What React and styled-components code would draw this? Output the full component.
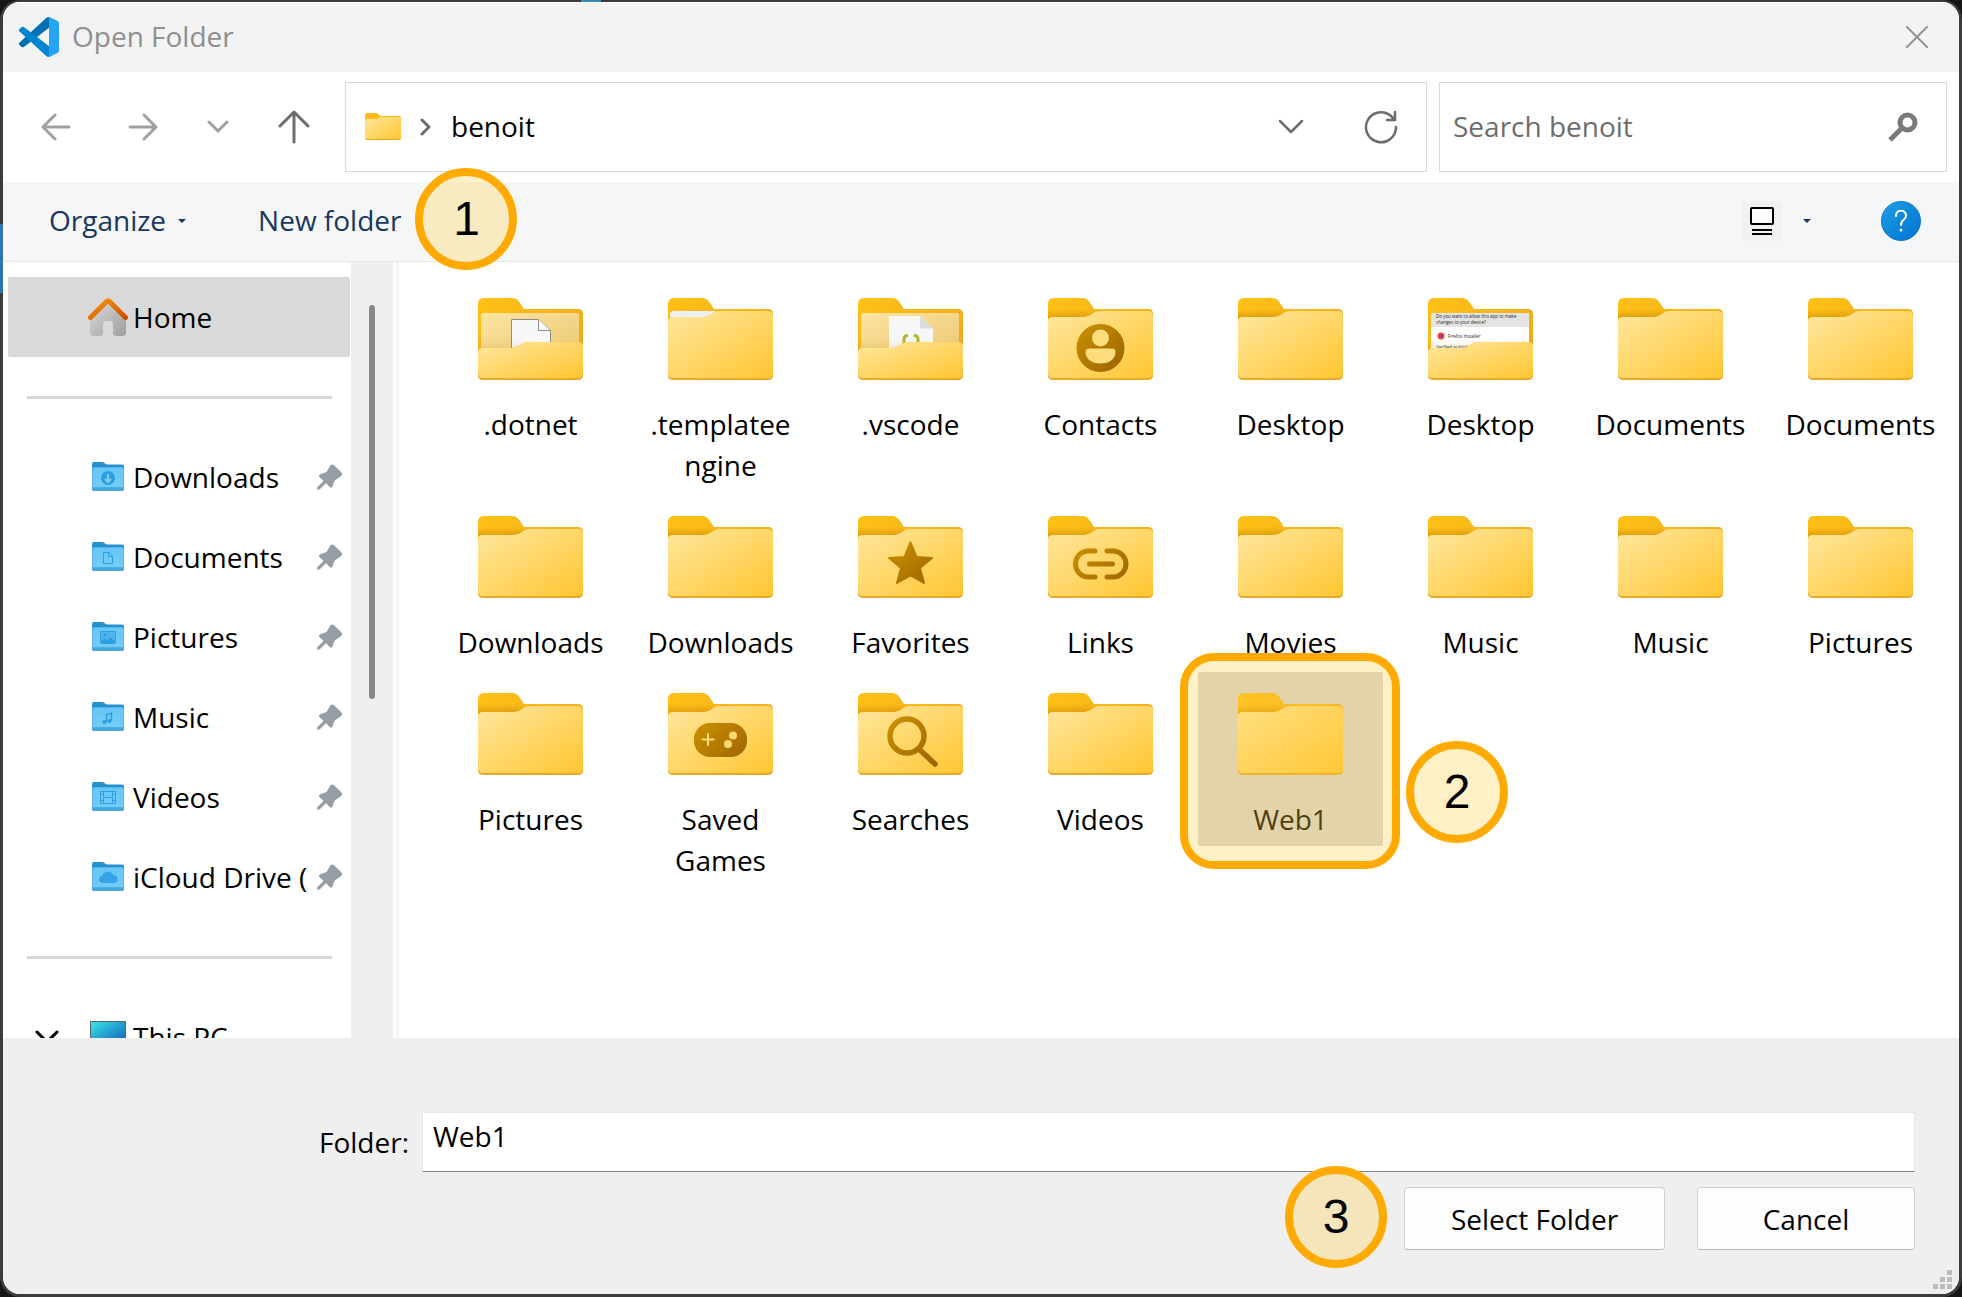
import React from 'react';
import styled, { createGlobalStyle } from 'styled-components';

const GlobalStyle = createGlobalStyle`
  *, *::before, *::after {
    box-sizing: border-box;
  }

  body {
    margin: 0;
    background: #161616;
  }

  body, button, input {
    font-family: 'Open Sans', 'Noto Sans', sans-serif;
    font-size: 28px;
    line-height: 41px;
    color: #000;
  }
`;

const Frame = styled.div`
  display: flex;
  height: 100vh;
  min-height: 720px;
  padding: 2px 3px 3px;
  border-radius: 20px;
  background:
    linear-gradient(#2f74ac, #2f74ac) 0 224px / 3px 69px no-repeat,
    linear-gradient(#2f7fa8, #3f9bc4) 581px 0 / 20px 2px no-repeat,
    #3c3c3c;
`;

const Dialog = styled.div`
  flex: 1;
  min-width: 0;
  display: flex;
  flex-direction: column;
  overflow: hidden;
  border-radius: 17px;
  background: #fff;
`;

const IconButton = styled.button`
  display: flex;
  align-items: center;
  justify-content: center;
  flex: none;
  width: ${props => props.$width}px;
  height: 60px;
  padding: 0;
  border: 0;
  background: none;
  color: ${props => props.$color || '#6d6d6d'};
`;

const TitleBar = styled.header`
  flex: none;
  display: flex;
  align-items: center;
  height: 70px;
  padding: 0 12px 2px 16px;
  border-top: 1px solid #fff;
  background: #f3f3f3;
`;

const Title = styled.h1`
  flex: 1;
  margin: 0 0 0 13px;
  font-size: 28px;
  font-weight: 400;
  color: #8f8f8f;
`;

const NavBar = styled.div`
  flex: none;
  display: flex;
  align-items: center;
  height: 110px;
  padding: 0 12px 1px 10px;
`;

const AddressBar = styled.div`
  flex: 1;
  display: flex;
  align-items: center;
  height: 90px;
  margin: 0 12px 0 6px;
  padding-left: 19px;
  border: 1px solid #d9d9d9;
`;

const Crumb = styled.span`
  flex: 1;
`;

const SearchBox = styled.div`
  flex: 0 1 508px;
  display: flex;
  align-items: center;
  height: 90px;
  border: 1px solid #d9d9d9;
`;

const SearchInput = styled.input`
  flex: 1;
  min-width: 0;
  padding: 0 0 0 13px;
  border: 0;
  outline: 0;
  background: none;

  &::placeholder {
    color: #6d6d6d;
    opacity: 1;
  }
`;

const Toolbar = styled.div`
  flex: none;
  display: flex;
  align-items: center;
  height: 80px;
  padding: 0 38px 2px 46px;
  border-bottom: 1px solid #e6e7e8;
  background: #f5f6f8;
`;

const Commands = styled.div`
  flex: 1;
  display: flex;
  gap: 72px;
`;

const ToolButton = styled.button`
  display: flex;
  align-items: center;
  gap: ${props => props.$gap || 12}px;
  padding: 0;
  border: 0;
  background: none;
  color: #1b365d;
`;

const Caret = styled.span`
  border: 4px solid transparent;
  border-top-color: #1b365d;
  border-bottom: 0;
`;

const ViewIcon = styled.span`
  display: flex;
  align-items: center;
  justify-content: center;
  width: 40px;
  height: 40px;
  border-radius: 4px;
  background: #f1f1f1;
`;

const HelpButton = styled.button`
  display: flex;
  align-items: center;
  justify-content: center;
  width: 40px;
  height: 40px;
  margin-left: 70px;
  padding: 0;
  border: 1px solid #0c74c4;
  border-radius: 50%;
  background: linear-gradient(135deg, #1e9fe6, #0072d2);
`;

const Anchor = styled.div`
  position: relative;
`;

const Badge = styled.div`
  position: absolute;
  z-index: 2;
  top: ${props => props.$top || '50%'};
  ${props => (props.$before ? 'right' : 'left')}: calc(100% + ${props => props.$distance}px);
  display: flex;
  align-items: center;
  justify-content: center;
  width: 102px;
  height: 102px;
  margin-top: -53px;
  border: 8px solid #ffaa00;
  border-radius: 50%;
  background: rgba(255, 205, 65, 0.3);
  background-clip: padding-box;
  font-family: 'Liberation Sans', Arial, sans-serif;
  font-size: 48px;
  line-height: 54px;
`;

const Highlight = styled.div`
  position: absolute;
  z-index: 1;
  inset: -19px -17px -23px -18px;
  border: 8px solid #ffaa00;
  border-radius: 34px;
  background: rgba(255, 205, 65, 0.3);
  background-clip: padding-box;
`;

const Body = styled.div`
  flex: 1;
  min-height: 0;
  display: flex;
`;

const Sidebar = styled.nav`
  flex: none;
  width: 348px;
  padding: 15px 1px 0 5px;
  overflow: hidden;
`;

const SideItem = styled.button`
  display: flex;
  align-items: center;
  width: 100%;
  height: 80px;
  padding: 0 8px 0 0;
  border: 0;
  border-radius: 2px;
  background: ${props => (props.$active ? '#d9d9d9' : 'none')};
  text-align: left;
`;

const Expander = styled.span`
  flex: none;
  display: flex;
  width: 80px;
  padding-left: 27px;
`;

const SideIcon = styled.span`
  flex: none;
  display: flex;
  justify-content: center;
  width: 40px;
`;

const SideLabel = styled.span`
  flex: 1;
  margin: 0 7px 0 5px;
  overflow: hidden;
  white-space: nowrap;
`;

const Divider = styled.hr`
  height: 3px;
  margin: 39px 18px 38px 19px;
  border: 0;
  background: #d6d6d6;
`;

const ScrollTrack = styled.div`
  flex: none;
  width: 42px;
  padding: 43px 18px 0;
  background: #efefef;
`;

const ScrollThumb = styled.div`
  height: 394px;
  border-radius: 3px;
  background: #878787;
`;

const Content = styled.main`
  flex: 1;
  min-width: 0;
  overflow: hidden;
  margin-left: 3px;
  padding: 15px 6px 0 39px;
  border-left: 3px solid #f7f7f7;
`;

const FileGrid = styled.div`
  display: grid;
  grid-template-columns: repeat(auto-fill, 185px);
  gap: 3px 5px;
  align-items: start;
`;

const FileItem = styled.button`
  display: flex;
  flex-direction: column;
  align-items: center;
  gap: 24px;
  width: 100%;
  padding: 21px 0 6px;
  border: 0;
  border-radius: 2px;
  background: ${props => (props.$selected ? '#d6d6d6' : 'none')};
`;

const FileLabel = styled.span`
  max-width: 158px;
  white-space: pre-line;
  text-align: center;
`;

const Footer = styled.footer`
  position: relative;
  flex: none;
  display: flex;
  flex-direction: column;
  gap: 15px;
  padding: 74px 44px 44px;
  background: #efefef;
`;

const FieldRow = styled.div`
  display: flex;
  align-items: center;
`;

const FieldLabel = styled.label`
  width: 362px;
  margin-right: 13px;
  text-align: right;
`;

const FolderInput = styled.input`
  flex: 1;
  min-width: 0;
  height: 60px;
  padding: 0 10px 12px;
  border: 1px solid #e6e6e6;
  border-bottom-color: #868686;
  border-radius: 0;
  outline: 0;
  background: #fff;
`;

const Actions = styled.div`
  display: flex;
  justify-content: flex-end;
  gap: 32px;
`;

const ActionButton = styled.button`
  width: ${props => props.$width}px;
  height: 63px;
  padding: 2px 0 0;
  border: 1px solid #d0d0d0;
  border-bottom-color: #bababa;
  border-radius: 4px;
  background: #fdfdfd;
`;

const Grip = styled.svg`
  position: absolute;
  right: 7px;
  bottom: 5px;
`;

const Defs = styled.svg`
  position: absolute;
`;

const Stroke = ({ width, height, d, weight = 3 }) => (
  <svg
    width={width}
    height={height}
    viewBox={`0 0 ${width} ${height}`}
    fill="none"
    stroke="currentColor"
    strokeWidth={weight}
    strokeLinecap="round"
    strokeLinejoin="round"
  >
    <path d={d} />
  </svg>
);

const Gradients = () => (
  <Defs width="0" height="0" aria-hidden="true">
    <defs>
      <linearGradient id="front" x1="0" y1="0" x2="1" y2="1">
        <stop offset="0" stopColor="#ffe79f" />
        <stop offset="1" stopColor="#ffc631" />
      </linearGradient>
      <linearGradient id="back" x1="0" y1="0" x2="1" y2="1">
        <stop offset="0" stopColor="#ffc116" />
        <stop offset="1" stopColor="#eaa41f" />
      </linearGradient>
      <linearGradient id="inside" x1="0" y1="0" x2="1" y2="1">
        <stop offset="0" stopColor="#fde4a2" />
        <stop offset="1" stopColor="#ecc874" />
      </linearGradient>
      <linearGradient id="shade" x1="0" y1="0" x2="0" y2="1">
        <stop offset="0" stopColor="#c98a00" stopOpacity="0" />
        <stop offset="1" stopColor="#b87a00" stopOpacity="0.45" />
      </linearGradient>
      <linearGradient id="glyph" gradientUnits="userSpaceOnUse" x1="30" y1="24" x2="75" y2="72">
        <stop offset="0" stopColor="#cc9200" />
        <stop offset="1" stopColor="#9c6400" />
      </linearGradient>
      <linearGradient id="sky" x1="0" y1="0" x2="0" y2="1">
        <stop offset="0" stopColor="#67c6f6" />
        <stop offset="1" stopColor="#72ccf8" />
      </linearGradient>
      <linearGradient id="roof" x1="0" y1="0" x2="1" y2="1">
        <stop offset="0" stopColor="#f59a0c" />
        <stop offset="1" stopColor="#d04a00" />
      </linearGradient>
      <linearGradient id="wall" x1="0" y1="0" x2="1" y2="1">
        <stop offset="0" stopColor="#dcdcdc" />
        <stop offset="1" stopColor="#9e9e9e" />
      </linearGradient>
      <linearGradient id="screen" x1="0" y1="0" x2="1" y2="1">
        <stop offset="0" stopColor="#3be3ea" />
        <stop offset="1" stopColor="#0b5cb5" />
      </linearGradient>
      <clipPath id="pocket">
        <rect x="3" y="15" width="98" height="42" rx="2" />
      </clipPath>
    </defs>
  </Defs>
);

const CodeLogo = () => (
  <svg width="40" height="40" viewBox="0 0 100 100">
    <path fill="#0070b3" d="M96.5 10.8 75.9.9A6.2 6.2 0 0 0 68.8 2.1L1.3 63.6a4.2 4.2 0 0 0 0 6.1l5.5 5a4.2 4.2 0 0 0 5.3.3L93.4 13.4A4.2 4.2 0 0 1 100 16.7v-.3a6.3 6.3 0 0 0-3.5-5.6Z" />
    <path fill="#0086d1" d="M96.5 89.2 75.9 99.1a6.2 6.2 0 0 1-7.1-1.2L1.3 36.4a4.2 4.2 0 0 1 0-6.1l5.5-5a4.2 4.2 0 0 1 5.3-.3l81.3 61.6a4.2 4.2 0 0 0 6.6-3.3v.3a6.3 6.3 0 0 1-3.5 5.6Z" />
    <path fill="#25a5f2" d="M75.9 99.1a6.2 6.2 0 0 1-7.1-1.2A3.7 3.7 0 0 0 75 95.3V4.7a3.7 3.7 0 0 0-6.2-2.6A6.2 6.2 0 0 1 75.9.9l20.6 9.9a6.3 6.3 0 0 1 3.5 5.6v67.2a6.3 6.3 0 0 1-3.5 5.6Z" />
  </svg>
);

// emblems drawn on a closed folder
const glyphs = {
  contact: (
    <g>
      <ellipse cx="52.5" cy="50" rx="24" ry="24" fill="url(#glyph)" />
      <circle cx="52.5" cy="40" r="8.5" fill="#ffdc7c" />
      <path fill="#ffdc7c" d="M41 50.5H64Q67.5 50.5 67.5 54C67.5 61 61 65.5 52.5 65.5S37.5 61 37.5 54Q37.5 50.5 41 50.5Z" />
    </g>
  ),
  star: (
    <path
      fill="url(#glyph)"
      stroke="url(#glyph)"
      strokeWidth="2"
      strokeLinejoin="round"
      d="M52.5 26.5 58.5 41 74 42 62 52 66 67 52.5 59.5 39 67 43 52 31 42 46.5 41Z"
    />
  ),
  link: (
    <g fill="none" stroke="url(#glyph)" strokeWidth="5" strokeLinecap="round">
      <path d="M47 35H40.5A13 13 0 0 0 40.5 61H47" />
      <path d="M59 35H65A13 13 0 0 1 65 61H59" />
      <path d="M41.5 48 64.5 48.01" />
    </g>
  ),
  game: (
    <g>
      <rect x="26" y="30" width="53" height="34" rx="16" fill="url(#glyph)" />
      <path d="M40 41V52M34.5 46.5H45.5" stroke="#ffdc7c" strokeWidth="2" strokeLinecap="round" />
      <circle cx="65" cy="42.5" r="4" fill="#ffd76e" />
      <circle cx="60" cy="51" r="4" fill="#ffd76e" />
    </g>
  ),
  search: (
    <g fill="none" stroke="url(#glyph)" strokeWidth="5.5" strokeLinecap="round">
      <circle cx="49" cy="43" r="17" />
      <path d="M62 57 77 71" />
    </g>
  ),
};

// file previews that stick out of an open folder
const pockets = {
  paper: (
    <g fill="#f8f8f8" stroke="#8c8c8c">
      <path d="M33.5 60V21.5H60.5L72.5 32.5V60" />
      <path d="M60.5 21.5V32.5H72.5" />
    </g>
  ),
  code: (
    <g>
      <path fill="#f6f7f8" d="M31 60V18H62L75 30.5V60Z" />
      <path fill="#dcdddf" d="M62 18V30.5H75Z" />
      <path fill="none" stroke="#b5b334" strokeWidth="3" d="M50 37.5Q46 37.5 46 41V47M56 37.5Q60 37.5 60 41V47" />
    </g>
  ),
  prompt: (
    <g clipPath="url(#pocket)" fontSize="4.5" fill="#222">
      <rect x="3" y="15" width="98" height="42" fill="#fff" />
      <rect x="3" y="15" width="98" height="14" fill="#e4e4e4" />
      <text x="8" y="20">Do you want to allow this app to make</text>
      <text x="8" y="26">changes to your device?</text>
      <circle cx="13" cy="38" r="3.5" fill="#f0462f" />
      <circle cx="13" cy="38" r="1.5" fill="#6b3fd0" />
      <text x="20" y="40">Firefox Installer</text>
      <text x="8" y="51">Verified publisher: Mozilla</text>
    </g>
  ),
};

const closedFront = 'M0 24Q0 19 5 19H36Q40 19 44 16Q48 13 51 13H100Q105 13 105 18V77Q105 82 100 82H5Q0 82 0 77Z';
const openFront = 'M0 54Q0 50 5 50H34Q38 50 42 47Q46 44 50 44H100Q105 44 105 48V77Q105 82 100 82H5Q0 82 0 77Z';

const Folder = ({ kind }) => {
  const open = Boolean(pockets[kind]);
  const front = open ? openFront : closedFront;

  return (
    <svg width="105" height="82" viewBox="0 0 105 82">
      <path
        fill="url(#back)"
        d="M0 6Q0 0 6 0H34Q39 0 42 5L46 11H100Q105 11 105 16V77Q105 81 100 81H5Q0 81 0 77Z"
      />
      {open && <rect x="3" y="15" width="98" height="42" rx="2" fill="url(#inside)" />}
      {open && pockets[kind]}
      {open && <path fill="url(#shade)" opacity="0.5" d="M0 40H105V60H0Z" />}
      {kind === 'stack' && <path fill="#eef0f3" d="M2 24V16Q2 13 6 13H48L40 24Z" />}
      {!open && kind !== 'stack' && <path fill="url(#shade)" d="M0 11H46L42 20H0Z" />}
      <path fill="#e9a92c" d={front} />
      <path fill="url(#front)" d={front.replace('V77Q105 82 100 82H5Q0 82 0 77', 'V75Q105 80 100 80H5Q0 80 0 75')} />
      {glyphs[kind]}
    </svg>
  );
};

const marks = {
  download: (
    <g>
      <circle cx="16" cy="16" r="7" fill="#2d9fe0" />
      <path d="M16 12V19M13 17 16 20 19 17" stroke="#7dd0fa" strokeWidth="2" fill="none" />
    </g>
  ),
  document: (
    <path d="M11.5 10.5H17L20.5 14V21.5H11.5ZM16.5 10.5V14.5H20.5" stroke="#2d9fe0" fill="none" />
  ),
  picture: (
    <g>
      <rect x="8.5" y="9.5" width="15" height="12" rx="1" fill="#4fb5ec" stroke="#2d9fe0" />
      <path fill="#2d9fe0" d="M9 20 12 16.5 15 18.5 19 15.5 23 19V21H9Z" />
      <circle cx="13" cy="13" r="1.5" fill="#2d9fe0" />
    </g>
  ),
  music: (
    <g>
      <path d="M14.5 20V12.5L19.5 11V19" stroke="#2d9fe0" strokeWidth="1.5" fill="none" />
      <circle cx="12.5" cy="20" r="2" fill="#2d9fe0" />
      <circle cx="17.5" cy="19" r="2" fill="#2d9fe0" />
    </g>
  ),
  video: (
    <path
      d="M8.5 9.5H23.5V21.5H8.5ZM11.5 9.5V21.5M20.5 9.5V21.5M11.5 15.5H20.5M8.5 12.5H11.5M8.5 18.5H11.5M20.5 12.5H23.5M20.5 18.5H23.5"
      stroke="#2d9fe0"
      fill="none"
    />
  ),
  cloud: <path fill="#36a3e4" d="M10.5 21A3.7 3.7 0 0 1 10 13.7A6.5 6.5 0 0 1 21.5 13A4 4 0 0 1 21.5 21Z" />,
};

const BlueFolder = ({ mark }) => (
  <svg width="32" height="30" viewBox="0 0 32 30">
    <path fill="#2591cc" d="M0 2Q0 0 2 0H10Q12 0 13 1.5Q14 2.5 16 2.5H30Q32 2.5 32 4.5V20H0Z" />
    <path fill="#58b4e6" d="M0 7Q0 5 2 5H30Q32 5 32 7V27Q32 29 30 29H2Q0 29 0 27Z" />
    <path fill="url(#sky)" d="M1 8Q1 6 3 6H29Q31 6 31 8V25H1Z" />
    <path fill="#3da2d8" d="M0 25.5H32V27Q32 29 30 29H2Q0 29 0 27Z" opacity="0.7" />
    {marks[mark]}
  </svg>
);

const HomeIcon = () => (
  <svg width="40" height="40" viewBox="0 0 40 40">
    <path
      fill="url(#wall)"
      d="M20 4 38 21V35Q38 39 34 39H29Q25 39 25 36V27Q25 24 22 24H18Q15 24 15 27V36Q15 39 12 39H6Q2 39 2 35V21Z"
    />
    <path
      d="M2.5 20.5 18 5Q20 3 22 5L37.5 20.5"
      fill="none"
      stroke="url(#roof)"
      strokeWidth="5"
      strokeLinecap="round"
    />
  </svg>
);

const PcIcon = () => (
  <svg width="36" height="32" viewBox="0 0 36 32">
    <rect width="36" height="25" rx="1" fill="#56656e" />
    <rect x="1" y="1" width="34" height="23" fill="url(#screen)" />
    <path fill="#8a959c" d="M14 25H22V30H27V32H9V30H14Z" />
  </svg>
);

const Pin = () => (
  <svg width="25" height="26" viewBox="0 0 25 26">
    <path
      fill="#949fa5"
      d="M13.5 1.2Q15-.3 16.8 1L24.5 8.5Q25.8 10.5 24 12.2L17.5 16.5 15.5 22.5Q14.5 24.5 12.8 23L9 19.3 2.5 25.5H0V23.5L6.5 16.8 2.5 13Q1 11.2 3 10.2L9.5 8Z"
    />
  </svg>
);

const places = [
  { name: 'Downloads', mark: 'download' },
  { name: 'Documents', mark: 'document' },
  { name: 'Pictures', mark: 'picture' },
  { name: 'Music', mark: 'music' },
  { name: 'Videos', mark: 'video' },
  { name: 'iCloud Drive (', mark: 'cloud' },
];

const folders = [
  { name: '.dotnet', kind: 'paper' },
  { name: '.templatee\nngine', kind: 'stack' },
  { name: '.vscode', kind: 'code' },
  { name: 'Contacts', kind: 'contact' },
  { name: 'Desktop' },
  { name: 'Desktop', kind: 'prompt' },
  { name: 'Documents' },
  { name: 'Documents' },
  { name: 'Downloads' },
  { name: 'Downloads' },
  { name: 'Favorites', kind: 'star' },
  { name: 'Links', kind: 'link' },
  { name: 'Movies' },
  { name: 'Music' },
  { name: 'Music' },
  { name: 'Pictures' },
  { name: 'Pictures' },
  { name: 'Saved Games', kind: 'game' },
  { name: 'Searches', kind: 'search' },
  { name: 'Videos' },
  { name: 'Web1', selected: true },
];

export default () => (
  <Frame>
    <GlobalStyle />
    <Gradients />
    <Dialog role="dialog" aria-label="Open Folder">
      <TitleBar>
        <CodeLogo />
        <Title>Open Folder</Title>
        <IconButton $width={60} $color="#929292" aria-label="Close">
          <Stroke width={22} height={22} weight={2} d="M1 1 21 21M21 1 1 21" />
        </IconButton>
      </TitleBar>

      <NavBar>
        <IconButton $width={86} $color="#a0a0a0" aria-label="Back">
          <Stroke width={30} height={28} d="M28 14H2M14 2 2 14 14 26" />
        </IconButton>
        <IconButton $width={88} $color="#a0a0a0" aria-label="Forward">
          <Stroke width={30} height={28} d="M2 14H28M16 2 28 14 16 26" />
        </IconButton>
        <IconButton $width={62} $color="#a0a0a0" aria-label="Recent locations">
          <Stroke width={22} height={14} d="M2 2 11 11 20 2" />
        </IconButton>
        <IconButton $width={90} aria-label="Up">
          <Stroke width={32} height={34} d="M16 32V2M2 16 16 2 30 16" />
        </IconButton>
        <AddressBar>
          <svg width="36" height="28" viewBox="0 0 36 28">
            <path fill="#fbb917" d="M0 2Q0 0 2 0H11Q13 0 15 3H34Q36 3 36 5V20H0Z" />
            <path fill="#e9a92c" d="M0 8Q0 6 2 6H12L15 4H34Q36 4 36 6V25Q36 27 34 27H2Q0 27 0 25Z" />
            <path fill="url(#front)" d="M0 8Q0 6 2 6H12L15 4H34Q36 4 36 6V24Q36 26 34 26H2Q0 26 0 24Z" />
          </svg>
          <IconButton $width={50} aria-label="Show folders">
            <Stroke width={12} height={18} d="M2 2 9 9 2 16" />
          </IconButton>
          <Crumb>benoit</Crumb>
          <IconButton $width={90} aria-label="Previous locations">
            <Stroke width={26} height={16} weight={2.5} d="M2 2 13 13 24 2" />
          </IconButton>
          <IconButton $width={90} aria-label="Refresh">
            <Stroke width={34} height={34} weight={2.5} d="M32 17A15 15 0 1 1 27 6L31 10M31 2V10H23" />
          </IconButton>
        </AddressBar>
        <SearchBox>
          <SearchInput type="text" placeholder="Search benoit" aria-label="Search benoit" />
          <IconButton $width={86} $color="#7a7a7a" aria-label="Search">
            <svg width="30" height="30" viewBox="0 0 30 30" fill="none" stroke="currentColor">
              <circle cx="19.5" cy="10.5" r="7.5" strokeWidth="5" />
              <path d="M14 16 2 28" strokeWidth="5" />
            </svg>
          </IconButton>
        </SearchBox>
      </NavBar>

      <Toolbar>
        <Commands>
          <ToolButton>
            Organize
            <Caret />
          </ToolButton>
          <Anchor>
            <ToolButton>New folder</ToolButton>
            <Badge $distance={14}>1</Badge>
          </Anchor>
        </Commands>
        <ToolButton $gap={21} aria-label="Change view">
          <ViewIcon>
            <svg width="24" height="28" viewBox="0 0 24 28">
              <rect x="1" y="1" width="22" height="16" rx="1" fill="#fff" stroke="#000" strokeWidth="2" />
              <path d="M2 23H22M2 27H22" stroke="#000" strokeWidth="2" />
            </svg>
          </ViewIcon>
          <Caret />
        </ToolButton>
        <HelpButton aria-label="Help">
          <svg width="14" height="22" viewBox="0 0 14 22">
            <path
              d="M2 6A5 5 0 1 1 10 9.5Q7 11.5 7 15"
              fill="none"
              stroke="#fff"
              strokeWidth="2"
              strokeLinecap="round"
            />
            <circle cx="7" cy="20" r="1.5" fill="#fff" />
          </svg>
        </HelpButton>
      </Toolbar>

      <Body>
        <Sidebar>
          <SideItem $active>
            <Expander />
            <SideIcon>
              <HomeIcon />
            </SideIcon>
            <SideLabel>Home</SideLabel>
          </SideItem>
          <Divider />
          {places.map(place => (
            <SideItem key={place.name}>
              <Expander />
              <SideIcon>
                <BlueFolder mark={place.mark} />
              </SideIcon>
              <SideLabel>{place.name}</SideLabel>
              <Pin />
            </SideItem>
          ))}
          <Divider />
          <SideItem>
            <Expander>
              <Stroke width={24} height={14} d="M2 2 12 12 22 2" />
            </Expander>
            <SideIcon>
              <PcIcon />
            </SideIcon>
            <SideLabel>This PC</SideLabel>
          </SideItem>
        </Sidebar>
        <ScrollTrack>
          <ScrollThumb />
        </ScrollTrack>
        <Content>
          <FileGrid>
            {folders.map((folder, i) => (
              <Anchor key={i}>
                <FileItem $selected={folder.selected}>
                  <Folder kind={folder.kind} />
                  <FileLabel>{folder.name}</FileLabel>
                </FileItem>
                {folder.selected && <Highlight />}
                {folder.selected && <Badge $distance={23} $top="70%">2</Badge>}
              </Anchor>
            ))}
          </FileGrid>
        </Content>
      </Body>

      <Footer>
        <FieldRow>
          <FieldLabel htmlFor="folder">Folder:</FieldLabel>
          <FolderInput id="folder" type="text" defaultValue="Web1" />
        </FieldRow>
        <Actions>
          <Anchor>
            <ActionButton $width={261}>Select Folder</ActionButton>
            <Badge $before $distance={17}>3</Badge>
          </Anchor>
          <ActionButton $width={218}>Cancel</ActionButton>
        </Actions>
        <Grip width="19" height="19" viewBox="0 0 19 19" fill="#bdbdbd" aria-hidden="true">
          <path d="M14 0H19V5H14ZM7 7H12V12H7ZM14 7H19V12H14ZM0 14H5V19H0ZM7 14H12V19H7ZM14 14H19V19H14Z" />
        </Grip>
      </Footer>
    </Dialog>
  </Frame>
);
